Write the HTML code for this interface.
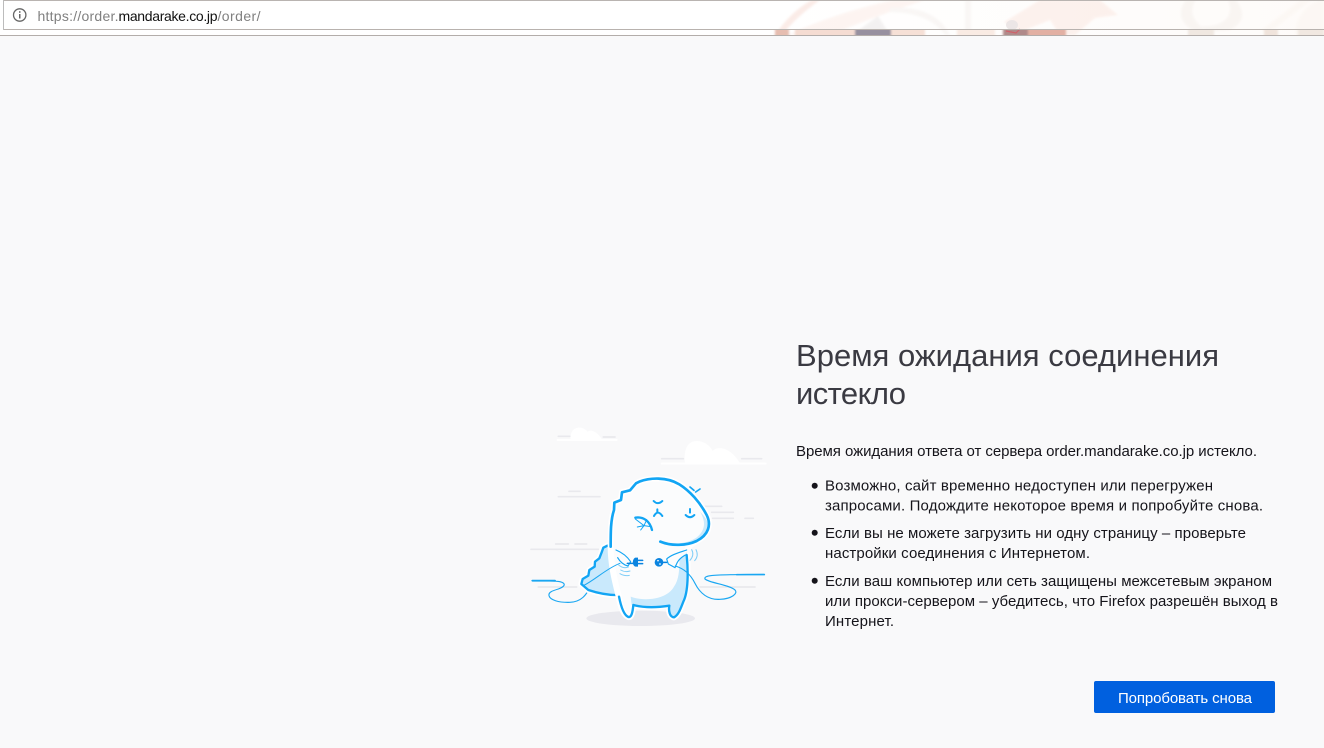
<!DOCTYPE html>
<html lang="ru"><head><meta charset="utf-8"><title>Время ожидания соединения истекло</title>
<style>
html,body{margin:0;padding:0;width:1324px;height:748px;overflow:hidden;background:#f9f9fa}
svg{position:absolute;left:0;top:0;display:block}
text{font-family:"Liberation Sans",sans-serif;white-space:pre}
.b{font-size:15px;fill:#15141a}
.h{font-size:31px;fill:#3a3a42}
.u{font-size:14px}
</style></head><body>
<svg width="1324" height="748" viewBox="0 0 1324 748" xmlns="http://www.w3.org/2000/svg">
<defs>
<filter id="s1" x="-5%" y="-50%" width="110%" height="200%"><feGaussianBlur stdDeviation="1"/></filter>
<linearGradient id="hg" x1="0" x2="1" y1="0" y2="0">
<stop offset="0" stop-color="#fff"/><stop offset="1" stop-color="#fefbf9"/>
</linearGradient>
</defs>
<rect width="1324" height="748" fill="#f9f9fa"/>
<!-- toolbar -->
<rect width="1324" height="36" fill="#fff"/>
<rect x="770" width="554" height="36" fill="url(#hg)"/>
<g opacity=".45" filter="url(#s1)">
<path d="M775 35C785 20 797 8 812 0H820C806 10 792 22 782 35Z" fill="#f6d6cc"/>
<path d="M788 35C820 20 855 8 895 0H925C895 10 860 22 832 35Z" fill="#fbe9e3"/>
<path d="M852 35L878 16L890 35Z" fill="#e6e3e3"/>
<path d="M890 8C920 6 940 15 950 35H945C935 20 915 12 890 12Z" fill="#f3eeeb"/>
<path d="M965 0H971V35H965Z" fill="#f3efec"/>
<path d="M1004 22L1040 0H1100L1118 15L1095 18L1075 35H1060L1050 20L1020 32Z" fill="#fae3db"/>
<path d="M1186 0C1176 12 1180 26 1200 34H1215C1198 28 1186 14 1196 0ZM1236 0C1245 12 1245 22 1230 30L1208 32L1200 26C1220 28 1236 18 1228 0Z" fill="#f3eee9"/>
<path d="M1262 30L1300 0H1312L1270 32ZM1295 35C1295 18 1305 5 1320 0H1324V35Z" fill="#faf4ef"/>
</g>
<!-- saturated band 30-35 -->
<clipPath id="band"><rect x="0" y="30" width="1324" height="5"/></clipPath>
<g clip-path="url(#band)"><g filter="url(#s1)">
<rect x="775" y="28" width="14" height="9" fill="#e6bdb0"/>
<rect x="795" y="28" width="60" height="9" fill="#f5dcd2"/>
<rect x="855" y="28" width="36" height="9" fill="#97909f"/>
<rect x="891" y="28" width="34" height="9" fill="#f6e0d6"/>
<rect x="957" y="28" width="38" height="9" fill="#f9ebe3"/>
<rect x="1003" y="28" width="25" height="9" fill="#b08a8a"/>
<rect x="1028" y="28" width="38" height="9" fill="#e2b0a3"/>
<rect x="1188" y="28" width="26" height="9" fill="#f0e8e1"/>
<rect x="1264" y="28" width="14" height="9" fill="#f0e4dc"/>
<rect x="1298" y="28" width="26" height="9" fill="#f1e8e1"/>
</g></g>
<!-- eye -->
<ellipse cx="1012" cy="25" rx="6" ry="5" fill="#ece6e6"/>
<path d="M1006 31L1016 33L1020 29" stroke="#d0616a" stroke-width="1.2" fill="none"/>
<!-- lines -->
<rect x="3" y="0" width="1321" height="1" fill="#b9b4b1"/>
<rect x="3" y="29" width="1321" height="1" fill="#b8b2ae"/>
<rect x="3" y="0" width="1" height="30" fill="#bcbcbc"/>
<rect y="35" width="1324" height="1" fill="#b3adaa"/>
<!-- info icon -->
<circle cx="19.7" cy="15" r="6.2" fill="none" stroke="#666" stroke-width="1.3"/>
<rect x="19" y="14" width="1.5" height="4.5" fill="#666"/>
<rect x="19" y="11.2" width="1.5" height="1.6" fill="#666"/>
<!-- url -->
<text class="u" x="37.5" y="21" fill="#808080" textLength="81" lengthAdjust="spacing">https://order.</text>
<text class="u" x="118.5" y="21" fill="#111" textLength="99" lengthAdjust="spacing">mandarake.co.jp</text>
<text class="u" x="217.5" y="21" fill="#808080" textLength="43" lengthAdjust="spacing">/order/</text>

<!-- heading -->
<text class="h" x="796" y="366" textLength="423" lengthAdjust="spacing">Время ожидания соединения</text>
<text class="h" x="796" y="404" textLength="110" lengthAdjust="spacing">истекло</text>
<!-- body -->
<text class="b" x="796" y="456" textLength="461" lengthAdjust="spacing">Время ожидания ответа от сервера order.mandarake.co.jp истекло.</text>
<circle cx="814.7" cy="485.7" r="3" fill="#15141a"/>
<text class="b" x="825" y="490.5" textLength="388" lengthAdjust="spacing">Возможно, сайт временно недоступен или перегружен</text>
<text class="b" x="825" y="510.5" textLength="438" lengthAdjust="spacing">запросами. Подождите некоторое время и попробуйте снова.</text>
<circle cx="814.7" cy="532.7" r="3" fill="#15141a"/>
<text class="b" x="825" y="538" textLength="421" lengthAdjust="spacing">Если вы не можете загрузить ни одну страницу – проверьте</text>
<text class="b" x="825" y="558" textLength="265" lengthAdjust="spacing">настройки соединения с Интернетом.</text>
<circle cx="814.7" cy="580.7" r="3" fill="#15141a"/>
<text class="b" x="825" y="586" textLength="447" lengthAdjust="spacing">Если ваш компьютер или сеть защищены межсетевым экраном</text>
<text class="b" x="825" y="606" textLength="453" lengthAdjust="spacing">или прокси-сервером – убедитесь, что Firefox разрешён выход в</text>
<text class="b" x="825" y="626" textLength="69" lengthAdjust="spacing">Интернет.</text>
<!-- button -->
<rect x="1094" y="681" width="181" height="32" rx="2" fill="#0060df"/>
<text x="1118" y="703" font-size="15" fill="#fff" textLength="134" lengthAdjust="spacing">Попробовать снова</text>

<!-- illustration -->
<g transform="translate(520 415) scale(.33333)" fill="none" stroke-linecap="round" stroke-linejoin="round">
  <!-- grey lines -->
  <g stroke="#e9e9ed" stroke-width="5">
    <path d="M115 245H240M147 229H180M555 274H605M575 292H640M578 310H640M675 310H700M33 403H235M107 387H145M165 387H200M55 516H170M540 516H705M425 131H490M665 131H725M115 64H150M250 66H285"/>
  </g>
  <!-- clouds -->
  <path d="M113 75H290M425 146H737" stroke="#fff" stroke-width="6"/>
  <path d="M152 72C150 52 160 38 178 38C192 38 198 46 203 50C212 42 232 50 245 72Z" fill="#fff"/>
  <path d="M495 144C490 100 505 78 530 78C555 78 572 95 578 108C592 92 630 95 660 144Z" fill="#fff"/>
  <!-- shadow -->
  <ellipse cx="362" cy="610" rx="163" ry="23" fill="#e9e9ee"/>
  <!-- cord left -->
  <path d="M37 497C70 497 100 497 120 500C140 505 135 515 115 522C95 528 85 532 87 542C90 555 115 563 150 562C185 560 198 540 212 515" stroke="#1aa7f2" stroke-width="3.5"/>
  <path d="M37 497H105" stroke="#1aa7f2" stroke-width="5.5"/>
  <!-- cape -->
  <path d="M272 395L262 392L250 398L245 412L238 430L225 440L224 455L208 465L205 482L188 492L184 507L205 525C235 535 270 542 305 540L300 470Z" fill="#c9e9fc" stroke="#fff" stroke-width="18"/>
  <path d="M272 395L262 392L250 398L245 412L238 430L225 440L224 455L208 465L205 482L188 492L184 507L205 525C235 535 270 542 305 540L300 470Z" fill="#c9e9fc" stroke="#12a5f4" stroke-width="7"/>
  <!-- body -->
  <path d="M272 395C272 350 272 315 282 285L283 263L303 255L306 232L330 226L348 205L358 200C390 188 440 185 478 208C510 228 540 262 560 300C575 330 565 360 530 378C515 386 505 392 500 410C505 470 505 530 490 560C482 580 476 600 462 607C450 606 445 590 448 572C410 578 370 578 340 570C338 590 335 608 325 606C310 600 300 570 295 540C285 500 272 450 272 395Z" fill="#fbfcfd" stroke="#fff" stroke-width="18"/>
  <path d="M190 512C225 495 260 460 300 445" stroke="#1aa7f2" stroke-width="3"/>
  <!-- shading -->
  <path d="M500 412C505 470 505 530 490 560C482 580 476 600 462 607C450 606 445 590 448 572C410 578 370 578 335 570L332 545C370 560 440 555 462 515C480 490 478 450 478 425Z" fill="#c9e9fc"/>
  <path d="M420 380C470 392 530 385 548 345C556 330 552 310 540 290C570 320 575 345 552 365C530 385 500 392 470 392Z" fill="#c9e9fc"/>
  <!-- outline -->
  <path d="M272 395C272 350 272 315 282 285L283 263L303 255L306 232L330 226L348 205L358 200C390 188 440 185 478 208C510 228 540 262 560 300C575 330 565 360 530 378C500 392 455 394 421 380" stroke="#12a5f4" stroke-width="8"/>
  <path d="M500 420C505 470 505 530 490 560C482 580 476 600 462 607C450 606 445 590 448 572C410 578 370 578 340 570C338 590 335 608 325 606C310 600 302 570 297 545" stroke="#12a5f4" stroke-width="7"/>
  <!-- face -->
  <g stroke="#12a5f4" stroke-width="6">
    <path d="M401 258Q413 271 427 258M402 303Q413 283 427 303M412 283V291M497 300Q510 313 523 300M510 282V293"/>
    <path d="M510 216L522 226M527 231L540 222" stroke-width="5"/>
    <path d="M346 308C372 304 390 320 396 345" stroke-width="7"/>
    <path d="M346 312L372 332L362 345M372 332L380 314M372 332L352 336M372 332L392 335" stroke-width="3"/>
  </g>
  <!-- hands -->
  <path d="M288 405C305 412 322 425 332 440L324 453C312 450 300 440 293 428" fill="#fbfcfd" stroke="#12a5f4" stroke-width="3.5"/>
  <path d="M500 405C480 412 455 418 440 432L445 447L465 458C470 448 470 435 496 420" fill="#fbfcfd" stroke="#12a5f4" stroke-width="3.5"/>
  <!-- plug -->
  <path d="M322 445H340" stroke="#0a84e0" stroke-width="4.5"/>
  <path d="M346 428C336 432 336 452 346 455L354 455V428Z" fill="#0a84e0"/>
  <path d="M352 436H368M352 446H368" stroke="#0a84e0" stroke-width="4.5"/>
  <circle cx="417" cy="442" r="13" fill="#0a84e0"/>
  <circle cx="414" cy="437" r="2.5" fill="#fff"/><circle cx="420" cy="447" r="2.5" fill="#fff"/>
  <path d="M429 442H440" stroke="#0a84e0" stroke-width="4.5"/>
  <!-- cord right -->
  <path d="M466 453C490 460 510 475 525 505C540 535 565 555 600 553C635 552 655 535 645 525C625 508 570 505 555 492C550 480 590 480 640 479C680 478 710 478 733 478" stroke="#1aa7f2" stroke-width="3.5"/>
  <path d="M650 479H733" stroke="#1aa7f2" stroke-width="4.5"/>
  <!-- vibration -->
  <g stroke="#7fcdf7" stroke-width="3">
    <path d="M296 450C305 458 315 460 325 456M302 465C312 471 320 471 330 468M300 476C310 482 318 483 328 481"/>
    <path d="M515 404C521 415 520 425 510 436M528 404C535 418 532 428 524 437"/>
  </g>
</g>
</svg>
</body></html>
